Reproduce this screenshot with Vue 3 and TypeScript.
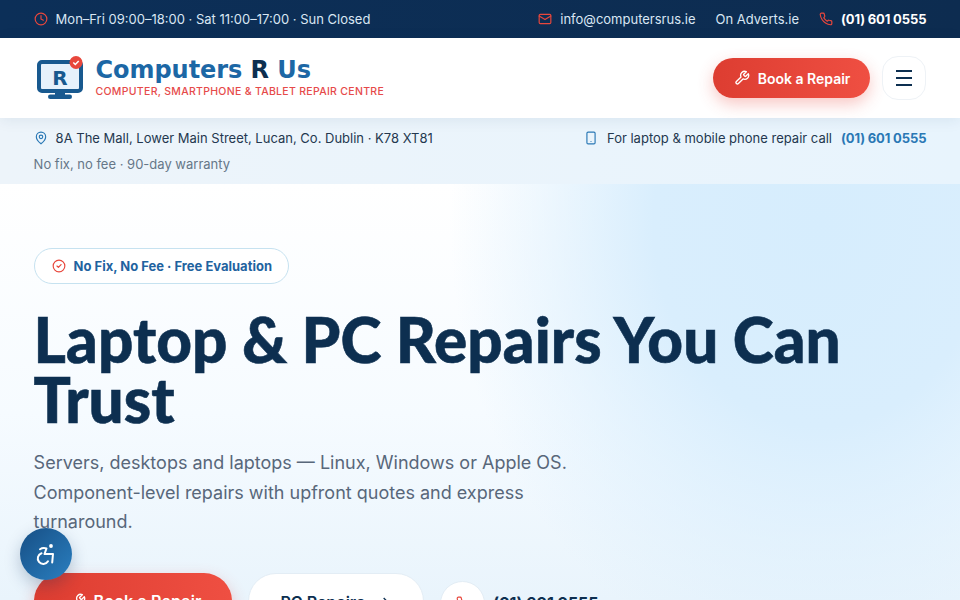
<template>
  <div class="page">
    <div class="topbar">
      <div class="top-left">
        <svg class="ico" viewBox="0 0 24 24"><circle cx="12" cy="12" r="10" /><path d="M12 6v6l4 2" /></svg>
        <span>Mon–Fri 09:00–18:00 · Sat 11:00–17:00 · Sun Closed</span>
      </div>
      <div class="top-right">
        <span class="top-item">
          <svg class="ico" viewBox="0 0 24 24"><rect x="2" y="4" width="20" height="16" rx="2" /><path d="m22 7-10 6L2 7" /></svg>
          info@computersrus.ie
        </span>
        <span>On Adverts.ie</span>
        <span class="top-item">
          <svg class="ico" viewBox="0 0 24 24"><path d="M22 16.9v3a2 2 0 0 1-2.2 2 19.8 19.8 0 0 1-8.6-3.1 19.5 19.5 0 0 1-6-6A19.8 19.8 0 0 1 2.1 4.2 2 2 0 0 1 4.1 2h3a2 2 0 0 1 2 1.7c.1 1 .4 1.9.7 2.8a2 2 0 0 1-.5 2.1L8.1 9.9a16 16 0 0 0 6 6l1.3-1.3a2 2 0 0 1 2.1-.4c.9.3 1.8.6 2.8.7a2 2 0 0 1 1.7 2z" /></svg>
          <b class="phone">(01) 601 0555</b>
        </span>
      </div>
    </div>

    <header class="header">
      <div class="brand">
        <svg class="logo" width="48" height="44" viewBox="0 0 48 44">
          <rect x="3" y="6" width="42" height="29" rx="3" fill="#e6f1fb" stroke="#18598f" stroke-width="4" />
          <rect x="19" y="35" width="10" height="5" fill="#18598f" />
          <rect x="12" y="38.500" width="24" height="4.500" rx="2.250" fill="#18598f" />
          <text x="24" y="29" text-anchor="middle" class="logo-r">R</text>
          <circle cx="40" cy="6.500" r="6.500" fill="#e8473c" />
          <path d="m37.300 6.500 2 2 3.400-3.600" fill="none" stroke="#fff" stroke-width="1.500" />
        </svg>
        <div>
          <div class="brand-name">Computers <span>R</span> Us</div>
          <div class="brand-sub">COMPUTER, SMARTPHONE &amp; TABLET REPAIR CENTRE</div>
        </div>
      </div>
      <div class="header-actions">
        <a class="btn-book">
          <svg class="wrench" viewBox="0 0 24 24"><path d="M14.700 6.300a1 1 0 0 0 0 1.400l1.600 1.600a1 1 0 0 0 1.400 0l3.770-3.770a6 6 0 0 1-7.940 7.940l-6.910 6.910a2.120 2.120 0 0 1-3-3l6.910-6.910a6 6 0 0 1 7.940-7.940l-3.760 3.760z" /></svg>
          Book a Repair
        </a>
        <button class="menu-btn" aria-label="Menu"><i></i><i></i><i></i></button>
      </div>
    </header>

    <div class="infobar">
      <div>
        <div class="address">
          <svg class="ico blue" viewBox="0 0 24 24"><path d="M20 10c0 6-8 12-8 12s-8-6-8-12a8 8 0 0 1 16 0z" /><circle cx="12" cy="10" r="3" /></svg>
          8A The Mall, Lower Main Street, Lucan, Co. Dublin · K78 XT81
        </div>
        <div class="warranty">No fix, no fee · 90-day warranty</div>
      </div>
      <div class="callout">
        <svg class="ico blue" viewBox="0 0 24 24"><rect x="5" y="2" width="14" height="20" rx="2" /><path d="M12 18h.01" /></svg>
        For laptop &amp; mobile phone repair call
        <b class="phone">(01) 601 0555</b>
      </div>
    </div>

    <section class="hero">
      <div class="badge">
        <svg class="ico" viewBox="0 0 24 24"><circle cx="12" cy="12" r="10" /><path d="m8.500 12 2.500 2.500 4.500-5" /></svg>
        No Fix, No Fee · Free Evaluation
      </div>
      <h1>Laptop &amp; PC Repairs You Can Trust</h1>
      <p>Servers, desktops and laptops — Linux, Windows or Apple OS. Component-level repairs with upfront quotes and express turnaround.</p>
      <div class="cta">
        <a class="btn-book big">
          <svg class="wrench" viewBox="0 0 24 24"><path d="M14.700 6.300a1 1 0 0 0 0 1.400l1.600 1.600a1 1 0 0 0 1.400 0l3.770-3.770a6 6 0 0 1-7.940 7.940l-6.910 6.910a2.120 2.120 0 0 1-3-3l6.910-6.910a6 6 0 0 1 7.940-7.940l-3.760 3.760z" /></svg>
          Book a Repair
        </a>
        <a class="btn-ghost">PC Repairs
          <svg class="arrow" viewBox="0 0 24 24"><path d="M5 12h14M13 6l6 6-6 6" /></svg>
        </a>
        <span class="cta-phone">
          <span class="round">
            <svg class="ico" viewBox="0 0 24 24"><path d="M22 16.900v3a2 2 0 0 1-2.200 2 19.800 19.800 0 0 1-8.600-3.100 19.500 19.500 0 0 1-6-6A19.800 19.800 0 0 1 2.100 4.200 2 2 0 0 1 4.100 2h3a2 2 0 0 1 2 1.700c.1 1 .4 1.900.7 2.800a2 2 0 0 1-.5 2.100L8.100 9.900a16 16 0 0 0 6 6l1.300-1.300a2 2 0 0 1 2.100-.4c.9.3 1.800.6 2.800.7a2 2 0 0 1 1.700 2z" /></svg>
          </span>
          <b>(01) 601 0555</b>
        </span>
      </div>
    </section>

    <button class="a11y" aria-label="Accessibility">
      <svg viewBox="0 0 24 24" width="24" height="24">
        <circle cx="17" cy="4" r="1.900" fill="#fff" stroke="none" />
        <path d="M6 7.200c2-1.400 4-1.600 6.500-.8l-2 5.600h8.500l-.8 8.500" />
        <path d="M7.500 11.300a5.500 5.500 0 1 0 6.500 8" />
      </svg>
    </button>
  </div>
</template>

<script setup lang="ts">
</script>

<style scoped>
.page {
  height: 600px;
  overflow: hidden;
  font-family: Inter, "Liberation Sans", sans-serif;
  color: #0d2f50;
  background: #fff;
}
.ico {
  width: 14px;
  height: 14px;
  fill: none;
  stroke: #e8473c;
  stroke-width: 2;
  stroke-linecap: round;
  stroke-linejoin: round;
  flex: none;
}
.ico.blue { stroke: #2a78b5; }

.topbar {
  height: 38px;
  padding: 0 33.600px;
  display: flex;
  align-items: center;
  justify-content: space-between;
  background: linear-gradient(90deg, #0c2f58, #0d2c50);
  color: #d9e6f3;
  font-size: 13px;
}
.top-left, .top-item { display: flex; align-items: center; gap: 8px; }
.top-right { display: flex; align-items: center; gap: 20px; }
.phone {
  font-family: Inter, sans-serif;
  font-weight: 700;
  font-size: 13px;
  word-spacing: -0.500px;
  letter-spacing: -0.050px;
}
.top-right .phone { color: #fff; }

.header {
  position: relative;
  height: 80px;
  padding: 0 33.600px 0 36px;
  display: flex;
  align-items: center;
  justify-content: space-between;
  background: #fff;
  box-shadow: 0 2px 14px rgba(13, 47, 87, 0.08);
}
.brand { display: flex; align-items: center; gap: 11.500px; }
.logo-r {
  font-family: "DejaVu Sans", sans-serif;
  font-weight: 700;
  font-size: 20px;
  fill: #18598f;
}
.brand-name {
  font-family: "DejaVu Sans", sans-serif;
  font-weight: 700;
  font-size: 24px;
  line-height: 27px;
  letter-spacing: -0.050px;
  color: #1c67a5;
}
.brand-sub {
  font-size: 10.500px;
  font-weight: 500;
  line-height: 15px;
  letter-spacing: 0.300px;
  color: #e64a4a;
}
.brand-name span { color: #0d2f50; }
.header-actions { display: flex; align-items: center; gap: 12px; }
.btn-book {
  height: 40px;
  padding: 0 20px 0 20.500px;
  display: flex;
  align-items: center;
  gap: 8px;
  border-radius: 20px;
  background: linear-gradient(90deg, #dd3d31, #ef4f42);
  box-shadow: 0 6px 16px rgba(232, 71, 60, 0.3);
  color: #fff;
  font-size: 14px;
  font-weight: 600;
}
.wrench {
  width: 16px;
  height: 16px;
  fill: none;
  stroke: #fff;
  stroke-width: 2;
  stroke-linecap: round;
  stroke-linejoin: round;
}
.menu-btn {
  width: 44px;
  height: 44px;
  padding: 0;
  display: flex;
  flex-direction: column;
  align-items: center;
  justify-content: center;
  gap: 5px;
  border: 1px solid #eef2f6;
  border-radius: 16px;
  background: #fff;
}
.menu-btn i {
  display: block;
  width: 16px;
  height: 2px;
  background: #0d2f50;
}

.infobar {
  height: 66px;
  padding: 0 33.600px;
  display: flex;
  justify-content: space-between;
  box-sizing: border-box;
  background: linear-gradient(90deg, #edf4fa, #e8f4fd);
  font-size: 13px;
  color: #24384f;
}
.address { display: flex; align-items: center; gap: 8px; height: 40px; }
.warranty { color: #667788; line-height: 12px; }
.callout { display: flex; align-items: center; gap: 9px; height: 40px; }
.callout .phone { color: #2a78b5; }

.hero {
  height: 416px;
  padding: 64px 33.600px 0;
  box-sizing: border-box;
  background:
    radial-gradient(ellipse 370px 450px at 820px 40px, #d6edfd 0%, #d9eefd 45%, rgba(217, 238, 253, 0.500) 72%, rgba(217, 238, 253, 0) 100%),
    linear-gradient(180deg, #fff 0%, #f6fbff 55%, #e9f4fc 100%);
}
.badge {
  display: inline-flex;
  align-items: center;
  gap: 8px;
  height: 36px;
  padding: 0 16px 0 17px;
  box-sizing: border-box;
  border: 1px solid #c6e2f0;
  border-radius: 18px;
  background: #fff;
  color: #1f639f;
  font-size: 13px;
  font-weight: 700;
}
h1 {
  margin: 25px 0 0;
  font-family: Lato, Inter, sans-serif;
  font-weight: 900;
  font-size: 62px;
  line-height: 60px;
  letter-spacing: 0.100px;
  word-spacing: -0.500px;
  -webkit-text-stroke: 0.600px #0d2f50;
  color: #0d2f50;
}
p {
  margin: 19px 0 0;
  max-width: 560px;
  font-size: 18px;
  line-height: 29.500px;
  color: #58677a;
}
.cta {
  margin-top: 36px;
  display: flex;
  align-items: flex-start;
  gap: 16px;
}
.btn-book.big {
  height: 56px;
  padding: 0 30px 0 36px;
  border-radius: 28px;
  font-size: 16px;
  letter-spacing: 0.150px;
}
.btn-ghost {
  height: 56px;
  padding: 0 32px;
  display: flex;
  align-items: center;
  gap: 10px;
  border: 1px solid #e3edf5;
  border-radius: 28px;
  background: #fff;
  font-size: 16px;
  font-weight: 600;
  color: #0d2f50;
}
.arrow {
  width: 16px;
  height: 16px;
  fill: none;
  stroke: #0d2f50;
  stroke-width: 2;
}
.cta-phone {
  display: flex;
  align-items: center;
  gap: 8px;
  margin-top: 8px;
  font-size: 16px;
  letter-spacing: -0.150px;
}
.round {
  width: 43px;
  height: 43px;
  display: flex;
  align-items: center;
  justify-content: center;
  border: 1px solid #e3edf5;
  border-radius: 50%;
  background: #fff;
}
.a11y {
  position: fixed;
  left: 20px;
  top: 528px;
  width: 52px;
  height: 52px;
  padding: 0;
  display: flex;
  align-items: center;
  justify-content: center;
  border: 0;
  border-radius: 50%;
  background: linear-gradient(135deg, #174f85, #2a7fc0);
  box-shadow: 0 6px 16px rgba(13, 47, 87, 0.25);
}
.a11y svg {
  fill: none;
  stroke: #fff;
  stroke-width: 2;
  stroke-linecap: round;
  stroke-linejoin: round;
}
</style>
